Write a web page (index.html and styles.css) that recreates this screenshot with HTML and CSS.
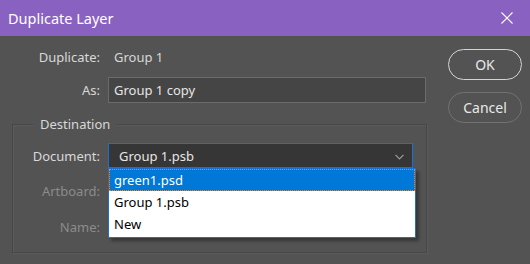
FILE: index.html
```html
<!DOCTYPE html>
<html lang="en">
<head>
    <meta charset="UTF-8">
    <title>Duplicate Layer</title>
    <link rel="stylesheet" href="styles.css">
</head>
<body>
    <!-- title bar -->
    <div class="titlebar">
        <span class="title">Duplicate Layer</span>
        <svg class="close" width="12" height="12" viewBox="0 0 12 12">
            <path d="M0.5 0.5 L11.5 11.5 M11.5 0.5 L0.5 11.5" stroke="#fff" stroke-width="1.1" fill="none"/>
        </svg>
    </div>

    <div class="dialog">
        <div class="main">
            <div class="row row-first">
                <span class="label">Duplicate:</span>
                <span class="value">Group 1</span>
            </div>
            <div class="row row-as">
                <span class="label">As:</span>
                <div class="input">Group 1 copy</div>
            </div>

            <!-- destination -->
            <div class="fieldset">
                <span class="legend">Destination</span>
                <div class="row row-doc">
                    <span class="label">Document:</span>
                    <div class="select">
                        <span>Group 1.psb</span>
                        <svg width="9" height="6" viewBox="0 0 9 6">
                            <path d="M0.5 0.8 L4.5 4.8 L8.5 0.8" stroke="#9a9a9a" stroke-width="1.2" fill="none"/>
                        </svg>
                        <ul class="menu">
                            <li class="selected">green1.psd</li>
                            <li>Group 1.psb</li>
                            <li>New</li>
                        </ul>
                    </div>
                </div>
                <div class="row row-dim row-artboard">
                    <span class="label dim">Artboard:</span>
                </div>
                <div class="row row-dim">
                    <span class="label dim">Name:</span>
                </div>
            </div>
        </div>

        <div class="buttons">
            <button class="btn btn-ok">OK</button>
            <button class="btn btn-cancel">Cancel</button>
        </div>
    </div>
</body>
</html>
```

FILE: styles.css
```css
/* whole window */
body {
    margin: 0;
    background-color: #535353;
    font-family: "Noto Sans", "Open Sans", sans-serif;
    font-size: 13px;
    color: #d8d8d8;
    width: 530px;
    height: 264px;
    overflow: hidden;
}

/* title bar */
.titlebar {
    height: 36px;
    background-color: #8962c1;
    display: flex;
    align-items: center;
    justify-content: space-between;
    padding: 0 17px 0 8px;
}

.title {
    color: #ffffff;
    font-size: 14.5px;
    padding-bottom: 1px;
}

.close {
    margin-bottom: 1px;
}

/* dialog body */
.dialog {
    display: flex;
    padding: 0 8px 0 12px;
}

.main {
    width: 416px;
}

.row {
    display: flex;
    align-items: center;
}

.label {
    width: 88px;
    text-align: right;
    flex-shrink: 0;
}

.row-first {
    margin-top: 11px;
    height: 20px;
}

.row-first .value {
    margin-left: 14px;
}

.row-as {
    margin-top: 10px;
}

.input {
    margin-left: 8px;
    width: 311px;
    height: 24px;
    line-height: 24px;
    padding-left: 5px;
    background-color: #454545;
    border: 1px solid #6b6b6b;
    color: #e6e6e6;
}

/* destination group */
.fieldset {
    position: relative;
    margin-top: 21px;
    width: 413px;
    height: 127px;
    border: 1px solid #464646;
    box-shadow: inset 1px 1px 0 #5b5b5b, 1px 1px 0 #5b5b5b;
}

.legend {
    position: absolute;
    top: -10px;
    left: 20px;
    padding: 0 7px;
    background-color: #535353;
}

.fieldset .label {
    width: 87px;
}

.row-doc {
    margin-top: 18px;
}

.select {
    position: relative;
    margin-left: 8px;
    width: 305px;
    height: 25px;
    background-color: #363636;
    border: 1px solid #1d6fd3;
    display: flex;
    align-items: center;
    justify-content: space-between;
    padding: 0 8px 0 10px;
    box-sizing: border-box;
    color: #e6e6e6;
}

.select svg {
    margin-top: 2px;
}

.row-dim {
    height: 36px;
}

.row-artboard {
    margin-top: 5px;
}

.label.dim {
    color: #8b8b8b;
}

/* dropdown list */
.menu {
    position: absolute;
    top: 24px;
    left: -1px;
    width: 306px;
    margin: 0;
    padding: 0 0 2px 0;
    list-style: none;
    background-color: #ffffff;
    border: 1px solid #1d6fd3;
    box-shadow: 3px 3px 3px rgba(0, 0, 0, 0.35);
    color: #000000;
}

.menu li {
    height: 22px;
    line-height: 22px;
    padding-left: 5px;
}

.menu li.selected {
    background-color: #0078d7;
    color: #ffffff;
    outline: 1px dotted #e8892a;
    outline-offset: -1px;
}

/* buttons */
.buttons {
    display: flex;
    flex-direction: column;
    gap: 12px;
    margin-top: 13px;
    margin-left: 20px;
}

.btn {
    width: 74px;
    height: 31px;
    border-radius: 16px;
    background: none;
    font-family: "Noto Sans", "Open Sans", sans-serif;
    font-size: 14px;
    color: #e8e8e8;
    padding: 0;
}

.btn-ok {
    border: 1.5px solid #d4d4d4;
}

.btn-cancel {
    border: 1.5px solid #727272;
}
```
